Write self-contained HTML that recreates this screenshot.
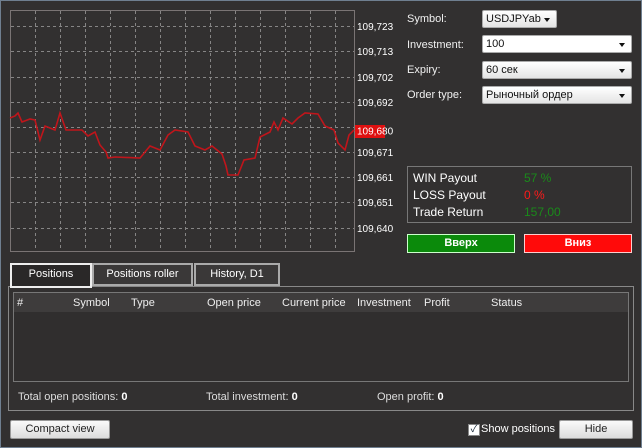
<!DOCTYPE html>
<html><head><meta charset="utf-8"><style>
body{margin:0;width:642px;height:448px;background:#323030;font-family:"Liberation Sans","Noto Sans CJK JP",sans-serif;color:#fff;position:relative;overflow:hidden}
.a{position:absolute}
.root{position:absolute;left:0;top:0;width:640px;height:446px;border:1px solid #6f7f90}
.lbl{font-size:11px;color:#f0f0f0}
.combo{position:absolute;background:linear-gradient(#fff,#e4e4e4);border:1px solid #aaa;border-radius:2px;color:#111;font-size:11px;line-height:16px;padding-left:3px;box-sizing:border-box;height:18px}
.combo:after{content:"";position:absolute;right:6px;top:7px;border-left:3px solid transparent;border-right:3px solid transparent;border-top:4px solid #111}
.pl{font-size:12px;color:#fff;left:413px}
.btn{position:absolute;background:linear-gradient(#fafafa,#dcdcdc);border:1px solid #999;border-radius:2px;color:#222;font-size:11px;text-align:center;line-height:17px;box-sizing:border-box;height:19px}
.tab{position:absolute;top:263px;height:23px;box-sizing:border-box;border:2px solid #aaa;background:#3a3838;font-size:11px;text-align:center;line-height:19px}
.th{position:absolute;top:297px;font-size:11px;color:#eee}
.tot{position:absolute;top:391px;font-size:11px;color:#ddd}
.tot b{color:#fff}
</style></head><body>
<div class="root"></div>
<svg class="a" style="left:0;top:0" width="400" height="260">
<rect x="10.5" y="10.5" width="344" height="241" fill="none" stroke="#7a7474"/>
<g stroke="#aaa" stroke-dasharray="3,3" stroke-width="1" opacity="0.7">
<path d="M35.5 11V251M60.5 11V251M85.5 11V251M110.5 11V251M135.5 11V251M160.5 11V251M185.5 11V251M210.5 11V251M235.5 11V251M260.5 11V251M285.5 11V251M310.5 11V251M335.5 11V251"/>
<path d="M11 26.5H354M11 51.5H354M11 77.5H354M11 102.5H354M11 127.5H354M11 152.5H354M11 177.5H354M11 202.5H354M11 228.5H354"/>
</g>
<polyline fill="none" stroke="#c0151b" stroke-width="1.6" points="10,118 15,116 18,113 22,122 30,119 35,120 40,140 45,126 50,128 55,130 60,113 66,130 82,130 88,136 95,132 100,145 106,152 108,158 115,157 140,158 145,152 150,146 160,150 168,135 175,130 188,132 195,146 205,150 212,146 222,154 226,166 228,175 238,175 244,160 255,158 260,137 270,132 274,122 278,130 283,118 292,124 298,118 305,113 318,114 325,126 334,130 338,143 345,150 349,135 354,130"/>
<rect x="355" y="125" width="30" height="13" fill="#e01010"/>
<g fill="#fff" font-size="10" font-family="Liberation Sans,sans-serif">
<text x="357" y="30">109,723</text><text x="357" y="55">109,713</text><text x="357" y="81">109,702</text><text x="357" y="106">109,692</text><text x="357" y="134.5">109,680</text><text x="357" y="156">109,671</text><text x="357" y="181">109,661</text><text x="357" y="206">109,651</text><text x="357" y="232">109,640</text>
</g>
</svg>
<div class="a lbl" style="left:407px;top:13px">Symbol:</div>
<div class="a lbl" style="left:407px;top:39px">Investment:</div>
<div class="a lbl" style="left:407px;top:64px">Expiry:</div>
<div class="a lbl" style="left:407px;top:89px">Order type:</div>
<div class="combo" style="left:482px;top:10px;width:75px">USDJPYab</div>
<div class="combo" style="left:482px;top:35px;width:150px;background:#fff">100</div>
<div class="combo" style="left:482px;top:61px;width:150px">60 сек</div>
<div class="combo" style="left:482px;top:86px;width:150px">Рыночный ордер</div>
<div class="a" style="left:407px;top:166px;width:225px;height:57px;border:1px solid #777;box-sizing:border-box"></div>
<div class="a pl" style="top:171px">WIN Payout</div><div class="a" style="left:524px;top:171px;font-size:12px;color:#1a8a1a">57 %</div>
<div class="a pl" style="top:188px">LOSS Payout</div><div class="a" style="left:524px;top:188px;font-size:12px;color:#ff1a1a">0 %</div>
<div class="a pl" style="top:205px">Trade Return</div><div class="a" style="left:524px;top:205px;font-size:12px;color:#1a8a1a">157,00</div>
<div class="a" style="left:407px;top:234px;width:108px;height:19px;background:#0b8a0b;border:1px solid #cfc;box-sizing:border-box;text-align:center;font-size:11px;font-weight:bold;line-height:17px">Вверх</div>
<div class="a" style="left:524px;top:234px;width:108px;height:19px;background:#ff0a0a;border:1px solid #fcc;box-sizing:border-box;text-align:center;font-size:11px;font-weight:bold;line-height:17px">Вниз</div>
<div class="a" style="left:8px;top:286px;width:626px;height:125px;border:1px solid #888;box-sizing:border-box"></div>
<div class="tab" style="left:10px;width:82px;border-color:#eee;background:#2a2828;height:25px">Positions</div>
<div class="tab" style="left:92px;width:101px">Positions roller</div>
<div class="tab" style="left:194px;width:86px">History, D1</div>
<div class="a" style="left:13px;top:292px;width:616px;height:90px;border:1px solid #777;box-sizing:border-box;background:#302e2e"></div>
<div class="a" style="left:14px;top:293px;width:614px;height:19px;background:#3e3c3c"></div>
<div class="th" style="left:17px">#</div><div class="th" style="left:73px">Symbol</div><div class="th" style="left:131px">Type</div><div class="th" style="left:207px">Open price</div><div class="th" style="left:282px">Current price</div><div class="th" style="left:357px">Investment</div><div class="th" style="left:424px">Profit</div><div class="th" style="left:491px">Status</div>
<div class="tot" style="left:18px">Total open positions: <b>0</b></div>
<div class="tot" style="left:206px">Total investment: <b>0</b></div>
<div class="tot" style="left:377px">Open profit: <b>0</b></div>
<div class="btn" style="left:10px;top:420px;width:100px">Compact view</div>
<div class="a" style="left:468px;top:424px;width:10px;height:10px;background:#fff;border:1px solid #888;color:#123;font-size:10px;line-height:10px;text-align:center">✓</div>
<div class="a" style="left:481px;top:423px;font-size:11px">Show positions</div>
<div class="btn" style="left:559px;top:420px;width:74px">Hide</div>
</body></html>
